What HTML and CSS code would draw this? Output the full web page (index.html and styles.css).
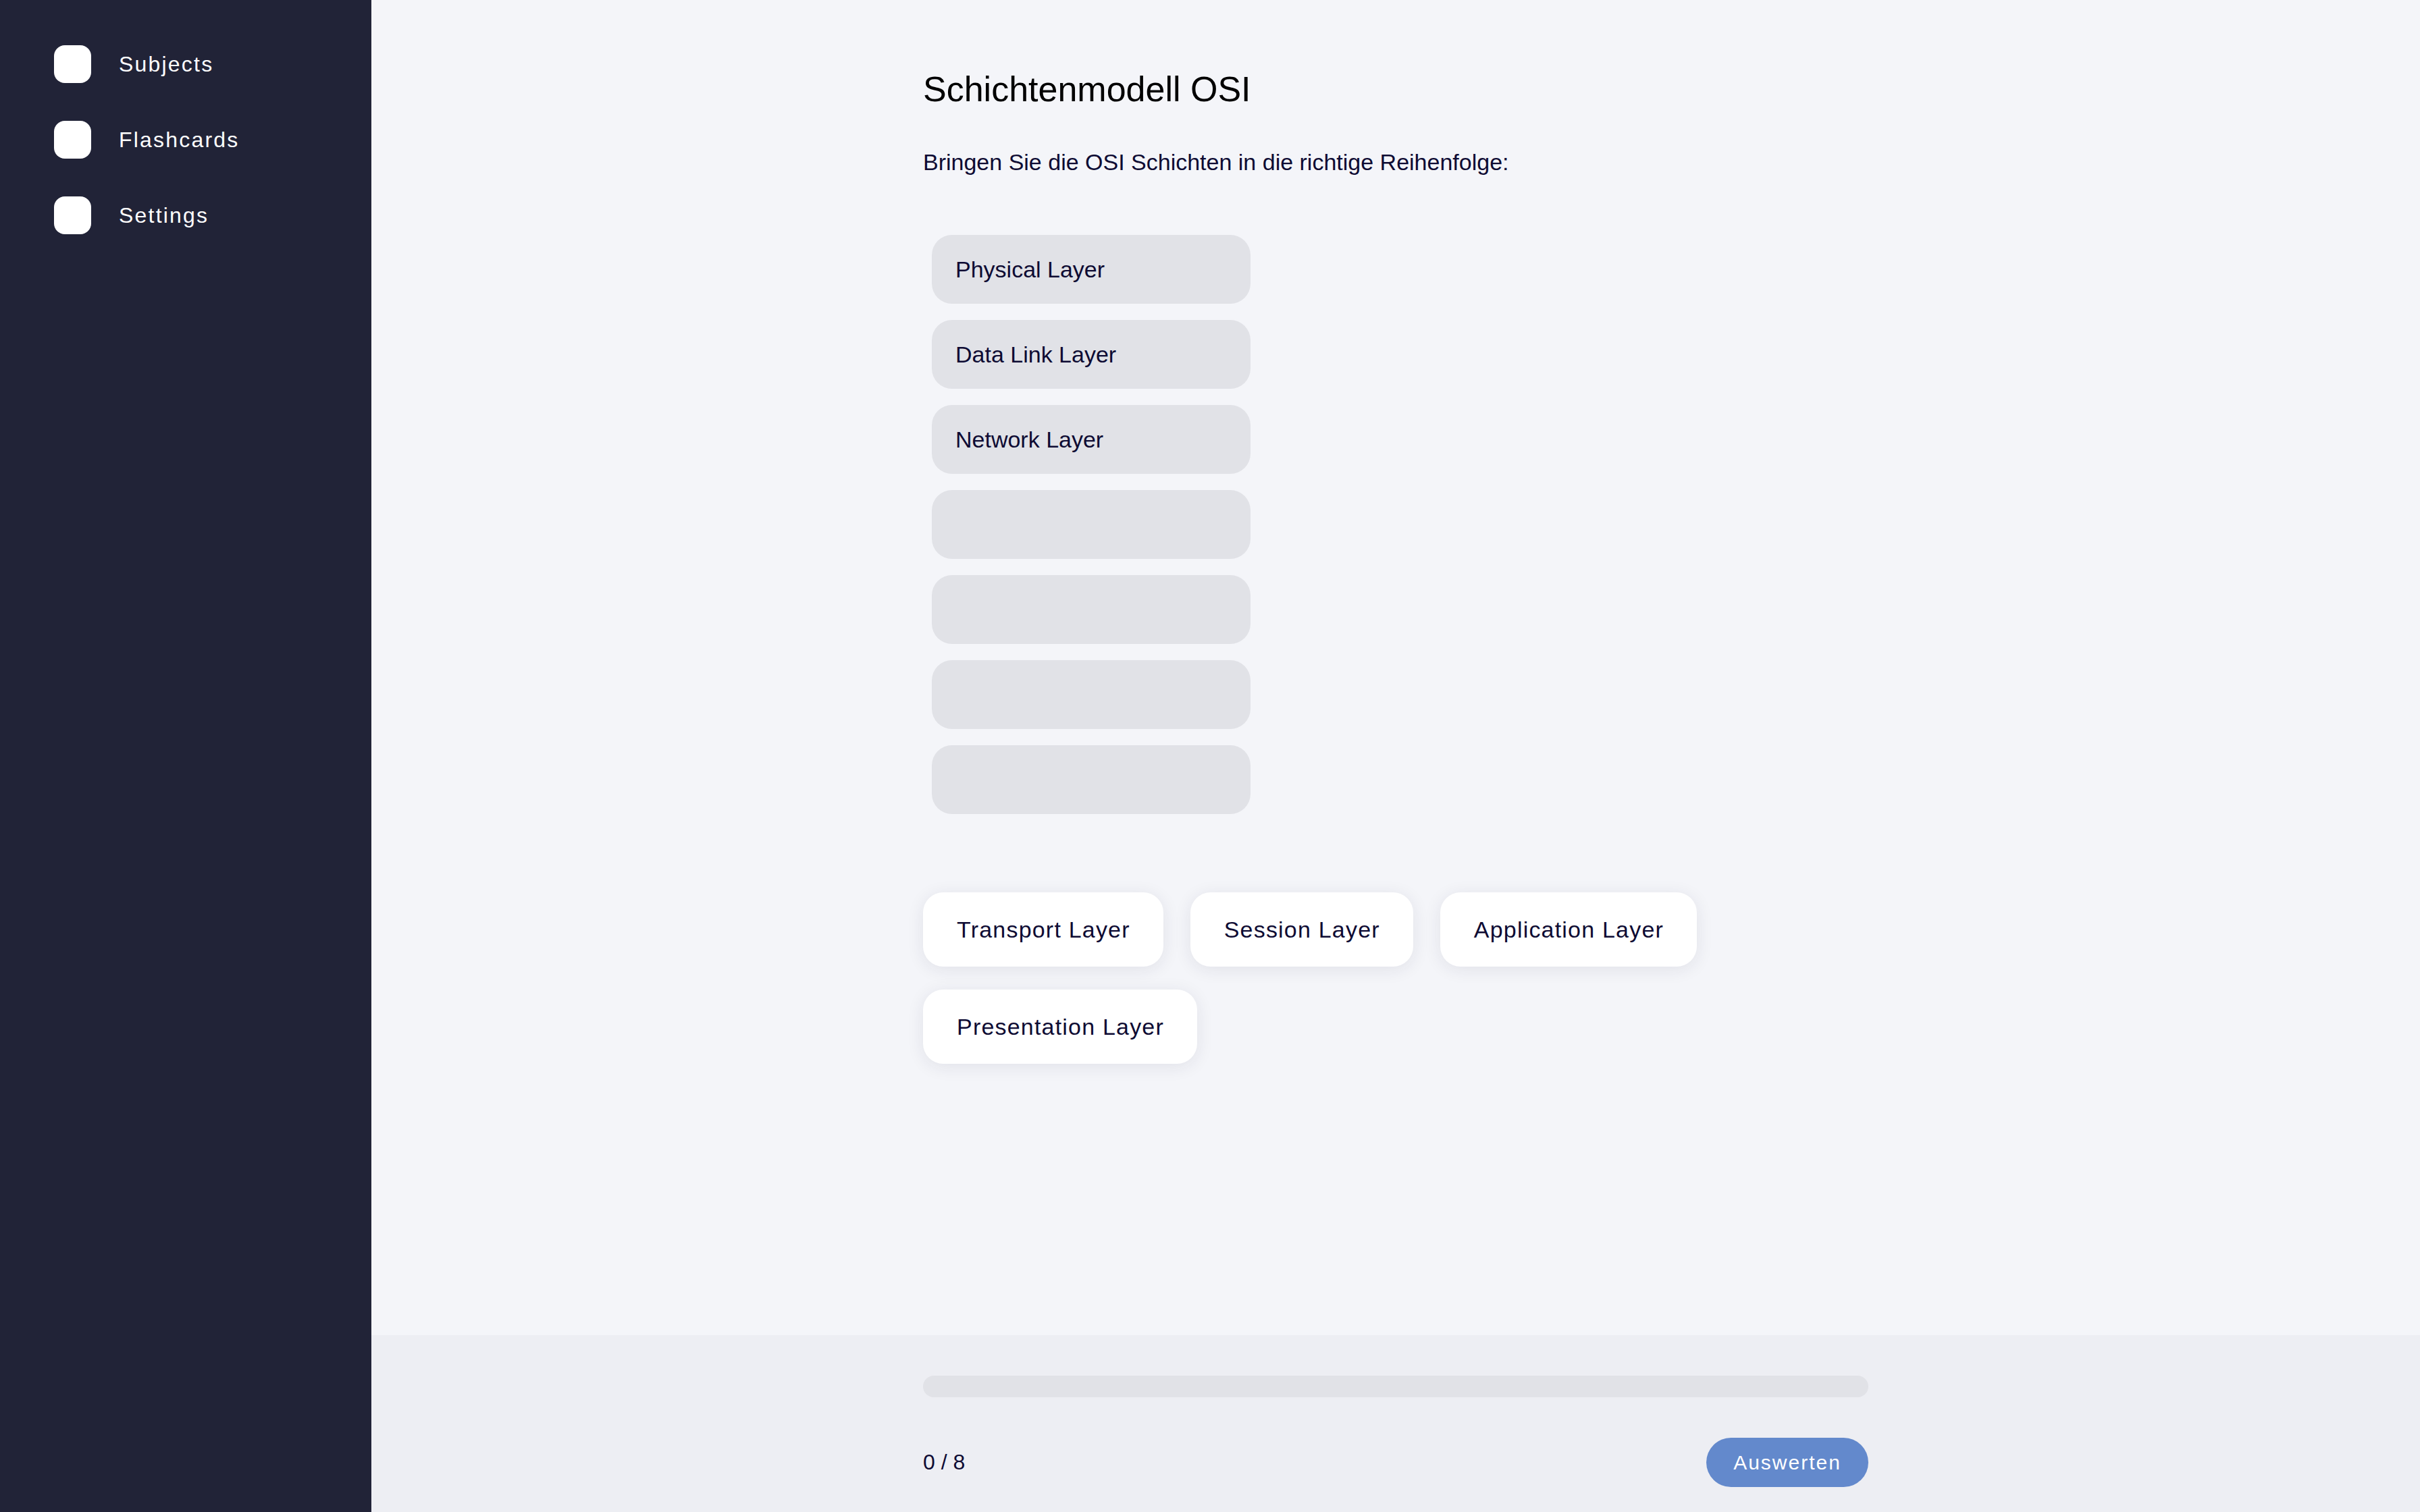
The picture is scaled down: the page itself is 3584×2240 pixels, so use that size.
FILE: index.html
```html
<!DOCTYPE html>
<html lang="de">
<head>
<meta charset="utf-8">
<title>Schichtenmodell OSI</title>
<link rel="stylesheet" href="styles.css">
</head>
<body>
<div class="app">
  <aside class="sidebar">
    <nav class="nav">
      <a class="nav-item"><span class="nav-icon"></span><span class="nav-label">Subjects</span></a>
      <a class="nav-item"><span class="nav-icon"></span><span class="nav-label">Flashcards</span></a>
      <a class="nav-item"><span class="nav-icon"></span><span class="nav-label">Settings</span></a>
    </nav>
  </aside>
  <main class="main">
    <section class="content">
      <div class="column">
        <h1 class="title">Schichtenmodell OSI</h1>
        <p class="question">Bringen Sie die OSI Schichten in die richtige Reihenfolge:</p>
        <ol class="slots">
          <li class="slot">Physical Layer</li>
          <li class="slot">Data Link Layer</li>
          <li class="slot">Network Layer</li>
          <li class="slot"></li>
          <li class="slot"></li>
          <li class="slot"></li>
          <li class="slot"></li>
        </ol>
        <div class="chips">
          <div class="chip">Transport Layer</div>
          <div class="chip">Session Layer</div>
          <div class="chip">Application Layer</div>
          <div class="chip">Presentation Layer</div>
        </div>
      </div>
    </section>
    <footer class="footer">
      <div class="column">
        <div class="progress"><div class="progress-fill"></div></div>
        <div class="footer-row">
          <span class="count">0 / 8</span>
          <button class="submit">Auswerten</button>
        </div>
      </div>
    </footer>
  </main>
</div>
</body>
</html>
```
FILE: styles.css
```css
* { box-sizing: border-box; }

html, body {
  margin: 0;
  padding: 0;
  height: 100%;
}

body {
  font-family: "Liberation Sans", Arial, Helvetica, sans-serif;
  color: #0e0b33;
  background: #f4f5f9;
}

.app {
  display: flex;
  height: 2240px;
}

.sidebar {
  width: 550px;
  flex: 0 0 550px;
  background: #212337;
  padding: 67px 0 0 80px;
}

.nav {
  display: flex;
  flex-direction: column;
  gap: 56px;
}

.nav-item {
  display: flex;
  align-items: center;
  gap: 41px;
  height: 56px;
  color: #ffffff;
  text-decoration: none;
}

.nav-icon {
  width: 55px;
  height: 56px;
  border-radius: 16px;
  background: #ffffff;
  flex: 0 0 auto;
}

.nav-label {
  font-size: 32px;
  letter-spacing: 2.2px;
  line-height: 40px;
}

.main {
  flex: 1;
  display: flex;
  flex-direction: column;
  background: #f4f5f9;
  min-width: 0;
}

.content {
  flex: 1;
  padding-top: 102px;
}

.column {
  width: 1400px;
  margin: 0 auto;
}

.title {
  margin: 0;
  font-size: 52px;
  line-height: 60px;
  font-weight: 400;
  color: #000000;
}

.question {
  margin: 58px 0 0;
  font-size: 34px;
  line-height: 40px;
}

.slots {
  list-style: none;
  margin: 88px 0 0 13px;
  padding: 0;
  display: flex;
  flex-direction: column;
  gap: 24px;
}

.slot {
  width: 472px;
  height: 102px;
  border-radius: 30px;
  background: #e1e2e7;
  display: flex;
  align-items: center;
  padding-left: 35px;
  font-size: 34px;
}

.chips {
  margin-top: 116px;
  display: flex;
  flex-wrap: wrap;
  gap: 34px 40px;
  width: 1200px;
}

.chip {
  height: 110px;
  display: flex;
  align-items: center;
  padding: 0 49px 0 50px;
  border-radius: 30px;
  background: #ffffff;
  font-size: 34px;
  letter-spacing: 1.2px;
  box-shadow: 0 4px 26px rgba(30, 30, 70, 0.09);
}

.footer {
  height: 262px;
  flex: 0 0 262px;
  background: #edeef3;
  padding-top: 60px;
}

.progress {
  height: 32px;
  border-radius: 16px;
  background: #e1e2e7;
  overflow: hidden;
}

.progress-fill {
  width: 0;
  height: 100%;
}

.footer-row {
  margin-top: 60px;
  display: flex;
  justify-content: space-between;
  align-items: center;
}

.count {
  font-size: 32px;
}

.submit {
  width: 240px;
  height: 73px;
  border: none;
  border-radius: 37px;
  background: #6389cc;
  color: #ffffff;
  font-family: inherit;
  font-size: 30px;
  letter-spacing: 2px;
  padding: 0;
  cursor: pointer;
}
```
